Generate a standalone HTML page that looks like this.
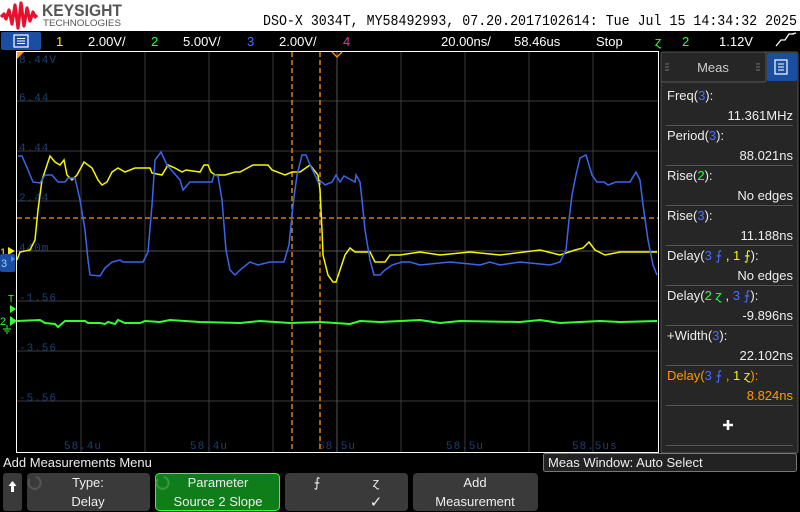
<!DOCTYPE html>
<html><head><meta charset="utf-8"><style>
body{margin:0;width:800px;height:512px;overflow:hidden;background:#000;font-family:"Liberation Sans",sans-serif}
svg{display:block}
</style></head><body>
<svg width="800" height="512" viewBox="0 0 800 512" xmlns="http://www.w3.org/2000/svg" font-family="Liberation Sans, sans-serif">
<rect x="0" y="0" width="800" height="31" fill="#fff"/>
<path d="M1,17 L4,14 L6,19 L9,10 L12,24 L15,5 L18,28 L21,3 L24,26 L27,8 L30,21 L33,12 L35,17 L37,15" fill="none" stroke="#e8112d" stroke-width="3.2" stroke-linejoin="round"/>
<text x="42" y="16" font-size="17" font-weight="bold" fill="#555" textLength="80" lengthAdjust="spacingAndGlyphs">KEYSIGHT</text>
<text x="43" y="26" font-size="9.5" fill="#555" textLength="78" lengthAdjust="spacingAndGlyphs">TECHNOLOGIES</text>
<text x="263" y="25" font-size="15" fill="#000" font-family="Liberation Mono, monospace" textLength="534" lengthAdjust="spacingAndGlyphs">DSO-X 3034T, MY58492993, 07.20.2017102614: Tue Jul 15 14:34:32 2025</text>
<rect x="0" y="31" width="800" height="19" fill="#000"/>
<rect x="1" y="32" width="40" height="18" rx="2" fill="#1a4ea0"/>
<rect x="14" y="35" width="14" height="12" fill="none" stroke="#fff" stroke-width="1.2"/>
<path d="M17,38.5h8M17,41h8M17,43.5h8" stroke="#fff"/>
<g font-size="13">
<text x="56" y="46" fill="#f6f600">1</text><text x="88" y="46" fill="#fff">2.00V/</text>
<text x="151" y="46" fill="#3f3">2</text><text x="183" y="46" fill="#fff">5.00V/</text>
<text x="247" y="46" fill="#4a6cff">3</text><text x="279" y="46" fill="#fff">2.00V/</text>
<text x="343" y="46" fill="#ff2a9a">4</text>
<text x="441" y="46" fill="#fff">20.00ns/</text><text x="514" y="46" fill="#fff">58.46us</text>
<text x="596" y="46" fill="#fff">Stop</text>
<text x="655" y="46" fill="#3f3">ɀ</text><text x="682" y="46" fill="#3f3">2</text>
<text x="719" y="46" fill="#fff">1.12V</text>
<path d="M776,46l5-6h4l4-6l5,0M792,34l4,-1" fill="none" stroke="#fff" stroke-width="1.3"/>
</g>
<g stroke="#3a3a3a" stroke-width="1">
<path d="M81,52V452M145,52V452M209,52V452M273,52V452M401,52V452M465,52V452M529,52V452M593,52V452"/>
<path d="M17,101H658M17,151H658M17,201H658M17,301H658M17,351H658M17,401H658"/>
</g>
<g stroke="#555"><path d="M337,52V452M17,251H658"/></g>
<rect x="16.5" y="51.5" width="642" height="401" fill="none" stroke="#fff"/>
<g fill="#1f3f72" font-size="11" font-family="Liberation Mono, monospace" letter-spacing="1">
<text x="19" y="63">8.44V</text><text x="19" y="101">6.44</text><text x="19" y="151">4.44</text><text x="19" y="201">2.44</text><text x="19" y="251">440m</text><text x="19" y="301">-1.56</text><text x="19" y="351">-3.56</text><text x="19" y="401">-5.56</text>
<text x="64" y="449">58.4u</text><text x="190" y="449">58.4u</text><text x="318" y="449">58.5u</text><text x="446" y="449">58.5u</text><text x="572" y="449">58.5us</text>
</g>
<path d="M17,52h7l-7,7z" fill="#f90"/>
<g stroke="#f90" stroke-width="1.3" stroke-dasharray="5,3" fill="none">
<path d="M17,218H658"/><path d="M292,52V452"/><path d="M320,52V452"/>
</g>
<path d="M332,52l5,5l5,-5" fill="none" stroke="#f90" stroke-width="1.3"/>
<polyline fill="none" stroke="#3f3" stroke-width="2" points="17,321 40,320 45,323 55,324 58,327 65,321 85,321 88,323 100,323 105,324 108,322 115,324 118,320 125,323 140,323 145,321 160,322 170,320 200,322 240,323 260,321 290,323 320,322 350,324 360,321 380,322 420,320 440,323 460,321 520,322 540,320 560,323 600,321 620,322 657,321"/>
<polyline fill="none" stroke="#f6f600" stroke-width="1.5" points="17,260 20,252 30,250 35,240 38,210 42,180 50,156 55,162 60,165 64,160 67,175 72,180 77,175 84,162 92,168 98,180 102,185 107,182 112,172 118,168 125,172 135,168 150,168 152,173 162,175 168,165 175,168 182,172 186,170 200,172 204,165 208,165 211,172 215,175 225,175 235,172 240,172 253,165 268,165 272,170 285,175 292,172 300,172 310,165 318,175 320,190 322,230 323,255 328,275 333,282 336,282 340,270 345,255 350,248 355,252 370,252 375,262 385,262 390,255 400,255 420,252 440,255 470,252 500,255 540,250 560,255 575,250 583,248 589,242 595,250 605,255 620,252 657,252"/>
<polyline fill="none" stroke="#3a66ee" stroke-width="1.5" points="18,156 22,156 28,170 33,182 40,183 45,175 52,175 58,182 65,182 68,178 75,178 80,200 85,230 88,260 90,275 100,276 105,268 112,262 120,260 123,262 143,262 148,252 152,205 155,160 161,152 167,165 180,180 183,190 190,182 212,182 214,175 218,176 222,200 226,250 230,270 235,275 240,270 250,262 258,265 270,262 284,262 289,245 293,205 297,175 302,155 306,155 310,165 315,175 318,182 322,182 325,185 332,182 336,175 340,182 344,176 355,182 356,175 360,182 362,200 365,230 370,260 374,275 380,275 385,270 392,265 402,262 410,262 420,265 450,262 480,265 490,262 500,265 520,262 550,265 560,262 566,250 569,220 572,195 576,175 580,158 586,155 592,175 597,182 604,182 608,185 616,182 630,182 636,172 640,180 643,205 648,240 653,265 657,275"/>
<text x="0" y="256" font-size="11" fill="#f6f600">1</text><path d="M8,247l7,4l-7,4z" fill="#f6f600"/>
<rect x="0" y="254" width="15" height="18" rx="2" fill="#1a4ea0"/><text x="1" y="267" font-size="11" fill="#9cf">3</text>
<path d="M11,256v6l4,-3z" fill="#4a8cff"/>
<text x="8" y="302" font-size="10" fill="#3f3">T</text><path d="M10,305l6,4l-6,4z" fill="#3f3"/>
<text x="0" y="325" font-size="11" fill="#3f3">2</text><path d="M10,316l7,5l-7,5z" fill="#3f3"/>
<path d="M7,325v4M3,329h8M4.5,331h5M6,333h2" stroke="#3f3"/>
<rect x="661" y="52" width="137" height="401" fill="#262626" stroke="#555" rx="2"/>
<rect x="661" y="52" width="105" height="30" fill="#262626" stroke="#555" rx="2"/>
<text x="713" y="72" font-size="13" fill="#ccc" text-anchor="middle">Meas</text>
<g fill="#888"><circle cx="666" cy="64" r=".7"/><circle cx="668" cy="64" r=".7"/><circle cx="666" cy="67" r=".7"/><circle cx="668" cy="67" r=".7"/><circle cx="666" cy="70" r=".7"/><circle cx="668" cy="70" r=".7"/><circle cx="757" cy="64" r=".7"/><circle cx="759" cy="64" r=".7"/><circle cx="757" cy="67" r=".7"/><circle cx="759" cy="67" r=".7"/><circle cx="757" cy="70" r=".7"/><circle cx="759" cy="70" r=".7"/></g>
<rect x="767" y="53" width="30" height="28" rx="2" fill="#1a4ea0"/>
<rect x="775" y="60" width="12" height="14" fill="none" stroke="#fff" stroke-width="1.2"/>
<path d="M778,64h6M778,67h6M778,70h6" stroke="#fff"/>
<g font-size="13" fill="#eee">
<text x="667" y="100">Freq(<tspan fill="#4a6cff">3</tspan>):</text><text x="793" y="120" text-anchor="end">11.361MHz</text>
<text x="667" y="140">Period(<tspan fill="#4a6cff">3</tspan>):</text><text x="793" y="160" text-anchor="end">88.021ns</text>
<text x="667" y="180">Rise(<tspan fill="#3f3">2</tspan>):</text><text x="793" y="200" text-anchor="end">No edges</text>
<text x="667" y="220">Rise(<tspan fill="#4a6cff">3</tspan>):</text><text x="793" y="240" text-anchor="end">11.188ns</text>
<text x="667" y="260">Delay(<tspan fill="#4a6cff">3 ⨍</tspan> , <tspan fill="#f6f600">1 ⨍</tspan>):</text><text x="793" y="280" text-anchor="end">No edges</text>
<text x="667" y="300">Delay(<tspan fill="#3f3">2 ɀ</tspan> , <tspan fill="#4a6cff">3 ⨍</tspan>):</text><text x="793" y="320" text-anchor="end">-9.896ns</text>
<text x="667" y="340">+Width(<tspan fill="#4a6cff">3</tspan>):</text><text x="793" y="360" text-anchor="end">22.102ns</text>
<text x="667" y="380" fill="#f90">Delay(<tspan fill="#4a6cff">3 ⨍</tspan> , <tspan fill="#f6f600">1 ɀ</tspan>):</text><text x="793" y="400" text-anchor="end" fill="#f90">8.824ns</text>
</g>
<g stroke="#555"><path d="M666,125.5H793M666,165.5H793M666,205.5H793M666,245.5H793M666,285.5H793M666,325.5H793M666,365.5H793M666,405.5H793M666,445.5H793"/></g>
<path d="M728,420v10M723,425h10" stroke="#fff" stroke-width="2.5"/>
<text x="3" y="467" font-size="13" fill="#eee">Add Measurements Menu</text>
<rect x="543.5" y="453.5" width="253" height="18" rx="2" fill="#222" stroke="#777"/>
<text x="548" y="467" font-size="13" fill="#eee">Meas Window: Auto Select</text>
<g font-size="13" fill="#eee" text-anchor="middle">
<rect x="3" y="473" width="19" height="38" rx="3" fill="#3a3a3a"/>
<path d="M12.5,481l-4,5h2.5v6h3v-6h2.5z" fill="#fff"/>
<rect x="27" y="473" width="123" height="38" rx="4" fill="#3a3a3a"/>
<text x="88" y="487">Type:</text><text x="88" y="506">Delay</text>
<rect x="155.5" y="473.5" width="124" height="37" rx="4" fill="#0f7d1a" stroke="#3f3"/>
<text x="218" y="487">Parameter</text><text x="218" y="506">Source 2 Slope</text>
<rect x="285" y="473" width="123" height="38" rx="4" fill="#3a3a3a"/>
<text x="317" y="487">⨍</text><text x="376" y="487">ɀ</text><text x="376" y="507" font-size="15">✓</text>
<rect x="413" y="473" width="125" height="38" rx="4" fill="#3a3a3a"/>
<text x="475" y="487">Add</text><text x="475" y="506">Measurement</text>
</g>
<path d="M30,479a6,6 0 1,0 6,-2" fill="none" stroke="#555" stroke-width="2"/>
<path d="M158,479a6,6 0 1,0 6,-2" fill="none" stroke="#3a9a3a" stroke-width="2"/>
</svg>
</body></html>
